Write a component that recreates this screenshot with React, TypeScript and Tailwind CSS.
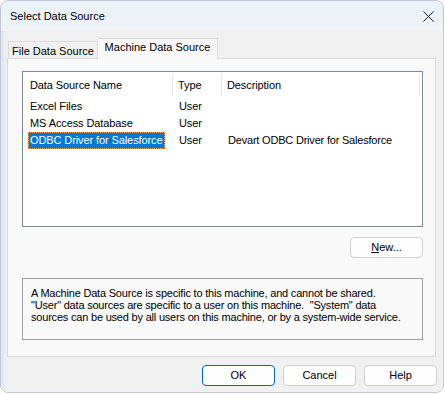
import React from "react";

const ROWS = [
  { name: "Excel Files", type: "User", desc: "" },
  { name: "MS Access Database", type: "User", desc: "" },
  { name: "ODBC Driver for Salesforce", type: "User", desc: "Devart ODBC Driver for Salesforce", selected: true },
];

function DialogButton({ label, primary, underline }: { label: string; primary?: boolean; underline?: number }) {
  return (
    <button
      className={
        "flex h-[21px] w-[73px] items-center justify-center rounded-[4px] border bg-[#fdfdfd] " +
        (primary ? "border-[#0067c0]" : "border-[#d0d0d0]")
      }
    >
      {underline === undefined ? (
        label
      ) : (
        <span>
          <span className="underline">{label.slice(0, 1)}</span>
          {label.slice(1)}
        </span>
      )}
    </button>
  );
}

export default function App() {
  return (
    <div className="h-[395px] w-[445px] bg-white font-['Liberation_Sans',Arial,sans-serif] text-[11px] leading-none text-black">
      <div className="flex h-[393px] w-[444px] flex-col overflow-hidden rounded-[8px] border border-[#c3c5d6] bg-[#f0f0f0]">
        {/* title bar */}
        <div className="flex h-[30px] shrink-0 items-center justify-between bg-gradient-to-b from-[#eaf2f8] to-[#eef3f7] pl-[9px] pr-[8px]">
          <span className="pt-px">Select Data Source</span>
          <svg width="11" height="11" viewBox="0 0 11 11" className="mr-px">
            <path d="M0.5 0.5 L10.5 10.5 M10.5 0.5 L0.5 10.5" stroke="#1a1a1a" strokeWidth="1" />
          </svg>
        </div>

        <div className="flex flex-1 bg-gradient-to-r from-[#e2e3ee] from-[0px] to-[#f0f0f0] to-[6px]">
          <div className="flex flex-1 flex-col pl-[6px] pt-[7px]">
            {/* tabs */}
            <div className="flex h-[20px] items-end pl-px">
              <div className="flex h-[17px] w-[90px] items-center justify-center border border-b-0 border-[#d9d9d9] bg-[#f0f0f0] pt-[2px]">
                File Data Source
              </div>
              <div className="relative z-10 -mb-px flex h-[21px] w-[120px] items-center justify-center border border-b-0 border-l-0 border-[#d9d9d9] bg-[#f9f9f9] pb-[3px]">
                Machine Data Source
              </div>
            </div>

            {/* tab panel */}
            <div className="flex h-[299px] w-[429px] flex-col border border-[#d9d9d9] bg-[#f9f9f9] pl-[14px] pt-[12px]">
              {/* list view */}
              <div className="h-[156px] w-[401px] border border-[#828790] bg-white tracking-[-0.1px]">
                <div className="flex h-[24px] items-stretch pt-[2px]">
                  <div className="flex w-[150px] items-center border-r border-[#e5e5e5] pl-[7px]">Data Source Name</div>
                  <div className="flex w-[49px] items-center border-r border-[#e5e5e5] pl-[5px]">Type</div>
                  <div className="flex w-[198px] items-center border-r border-[#e5e5e5] pl-[5px]">Description</div>
                </div>
                <div className="pt-[2px]">
                  {ROWS.map((r) => (
                    <div key={r.name} className="flex h-[17px] items-center">
                      <div className="flex h-full w-[150px] items-center pl-[5px]">
                        {r.selected ? (
                          <span className="flex h-[17px] items-center border border-dotted border-[#f4b26a] bg-[#0078d7] px-px text-white">
                            {r.name}
                          </span>
                        ) : (
                          <span className="pl-[2px]">{r.name}</span>
                        )}
                      </div>
                      <div className="w-[49px] pl-[6px]">{r.type}</div>
                      <div className="pl-[6px] tracking-[-0.2px]">{r.desc}</div>
                    </div>
                  ))}
                </div>
              </div>

              <div className="mt-[10px] flex w-[401px] justify-end">
                <DialogButton label="New..." underline={0} />
              </div>

              <div className="mt-[20px] h-[62px] w-[401px] border border-[#a0a0a0] pl-[8px] pt-[8px] leading-[12px] tracking-[-0.2px]">
                A Machine Data Source is specific to this machine, and cannot be shared.
                <br />
                "User" data sources are specific to a user on this machine.&nbsp; "System" data
                <br />
                sources can be used by all users on this machine, or by a system-wide service.
              </div>
            </div>

            {/* dialog buttons */}
            <div className="mt-[8px] flex w-[430px] justify-end gap-[8px]">
              <DialogButton label="OK" primary />
              <DialogButton label="Cancel" />
              <DialogButton label="Help" />
            </div>
          </div>
        </div>
      </div>
    </div>
  );
}
